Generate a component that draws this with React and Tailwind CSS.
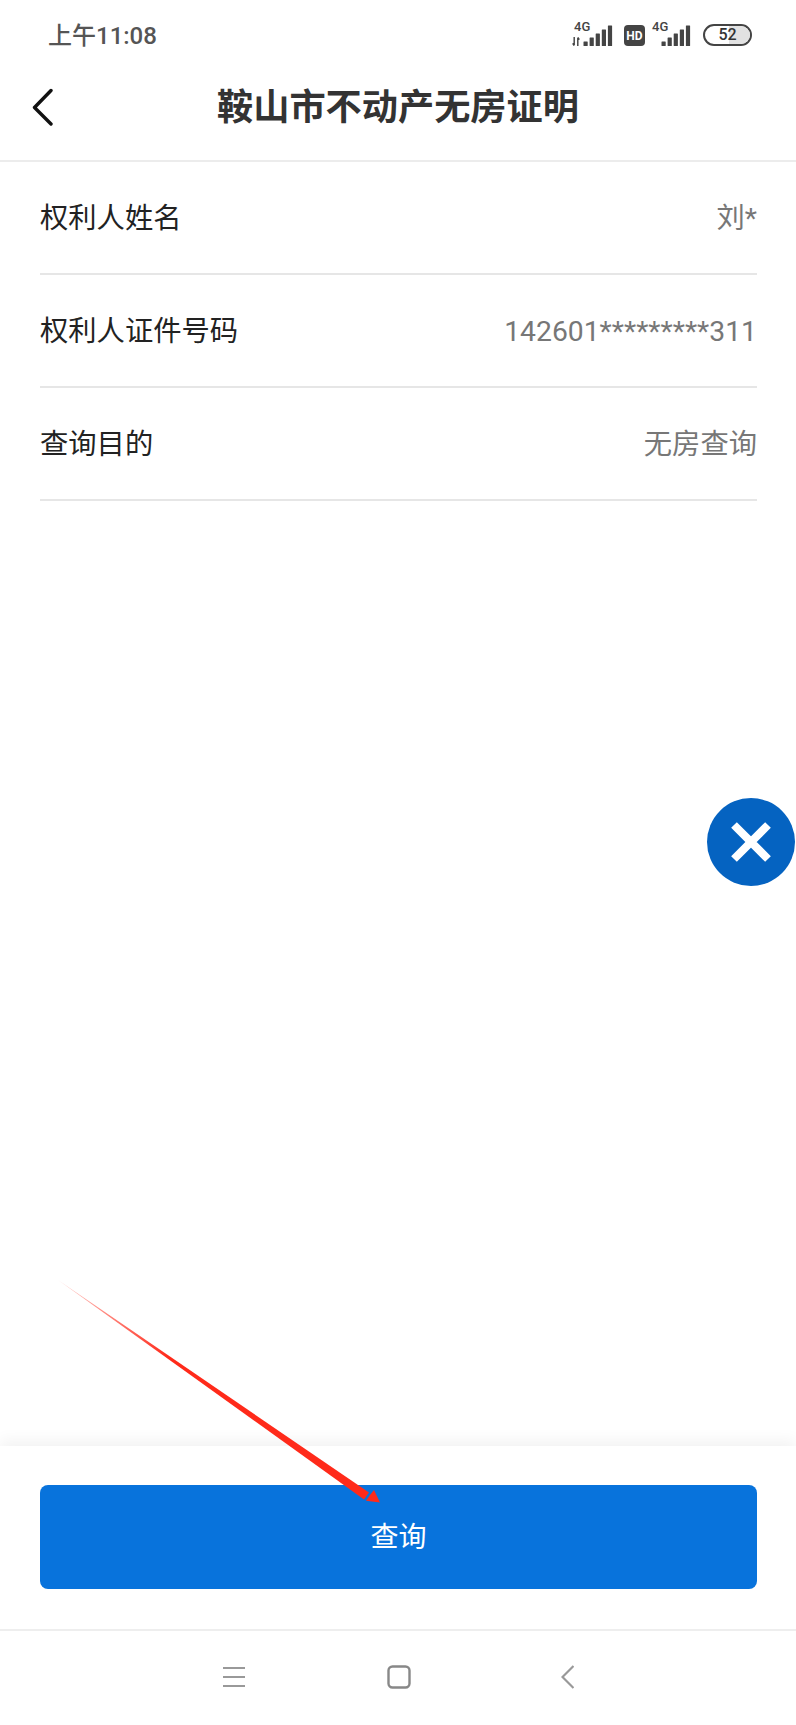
const cjk = "font-['Roboto','Noto_Sans_CJK_SC',sans-serif]";

const rows = [
  { label: "权利人姓名", value: "刘*" },
  { label: "权利人证件号码", value: "142601*********311" },
  { label: "查询目的", value: "无房查询" },
];

function Signal({ className }) {
  return (
    <svg width="30" height="21" viewBox="0 0 30 21" className={className} fill="#444">
      <rect x="0.5" y="16.5" width="4.2" height="4.5" rx="0.5" />
      <rect x="6.6" y="12.5" width="4.2" height="8.5" rx="0.5" />
      <rect x="12.7" y="8.5" width="4.2" height="12.5" rx="0.5" />
      <rect x="18.8" y="4.5" width="4.2" height="16.5" rx="0.5" />
      <rect x="24.9" y="0.5" width="4.2" height="20.5" rx="0.5" />
    </svg>
  );
}

function StatusBar() {
  return (
    <div className="h-[62px] flex items-center justify-between pl-[48px] pr-[44px] shrink-0">
      <span className={`${cjk} text-[24px] leading-none font-medium text-[#555] mt-[9px]`}>
        上午11:08
      </span>
      <div className="flex items-start h-[40px] mt-[8px]">
        {/* sim 1 */}
        <div className="relative w-[41px] h-[40px]">
          <span className="absolute left-[2px] top-0 text-[13px] leading-[24px] font-medium text-[#444] font-['Roboto',sans-serif]">4G</span>
          <svg width="8" height="9" viewBox="0 0 8 10" className="absolute left-0 top-[22px]" fill="none" stroke="#444" strokeWidth="1.6">
            <path d="M2 0V9M0.3 7L2 9.5M6 10V1M7.7 3L6 0.5" />
          </svg>
          <Signal className="absolute left-[11px] top-[10px]" />
        </div>
        {/* HD badge */}
        <div className="ml-[11px] mt-[10px] w-[21px] h-[21px] rounded-[4px] bg-[#444] flex items-center justify-center text-white text-[12px] font-bold leading-none font-['Roboto',sans-serif]">
          HD
        </div>
        {/* sim 2 */}
        <div className="relative ml-[7px] w-[39px] h-[40px]">
          <span className="absolute left-0 top-0 text-[13px] leading-[24px] font-medium text-[#444] font-['Roboto',sans-serif]">4G</span>
          <Signal className="absolute left-[9px] top-[10px]" />
        </div>
        {/* battery */}
        <div className="ml-[12px] mt-[9px] w-[49px] h-[22px] rounded-full border-2 border-[#444] overflow-hidden relative flex items-center justify-center">
          <div className="absolute right-0 top-0 bottom-0 w-[21px] bg-[#e2e2e2]" />
          <span className="relative text-[16px] leading-none font-medium text-[#333] font-['Roboto',sans-serif]">52</span>
        </div>
      </div>
    </div>
  );
}

function Header() {
  return (
    <div className="relative h-[98px] shrink-0 flex items-center justify-center border-b-2 border-[#ececec] box-content">
      <button className="absolute left-[32px] top-[26px]" aria-label="back">
        <svg width="22" height="38" viewBox="0 0 22 38" fill="none" stroke="#111" strokeWidth="3.4" strokeLinecap="round" strokeLinejoin="round">
          <path d="M19 2.5 2.5 19.5 19 36" />
        </svg>
      </button>
      <h1 className={`${cjk} text-[36.2px] font-bold leading-none text-[#333] mt-[-6px]`}>鞍山市不动产无房证明</h1>
    </div>
  );
}

export default function App() {
  return (
    <div className={`${cjk} relative w-[796px] h-[1725px] bg-white flex flex-col overflow-hidden`}>
      <StatusBar />
      <Header />

      <div className="flex-1 pl-[40px] pr-[39px]">
        {rows.map((r) => (
          <div key={r.label} className="h-[113px] border-b-2 border-[#e6e6e6] flex items-start justify-between pt-[39px]">
            <span className="text-[28.3px] leading-[36px] text-[#222]">{r.label}</span>
            <span className="text-[28.3px] leading-[36px] text-[#777]">{r.value}</span>
          </div>
        ))}
      </div>

      {/* bottom action panel */}
      <div className="h-[183px] shrink-0 bg-white pl-[40px] pr-[39px] pt-[39px] shadow-[0_-6px_14px_rgba(0,0,0,0.05)] relative">
        <button className="w-full h-[104px] rounded-[8px] bg-[#0873dc] text-white text-[28px] leading-none pt-[2px]">查询</button>
      </div>

      {/* system nav */}
      <div className="h-[96px] shrink-0 border-t-2 border-[#eeeeee] bg-white relative flex items-center justify-center pb-[2px]">
        <svg width="22" height="22" viewBox="0 0 22 22" fill="none" stroke="#999" strokeWidth="2.2" className="mr-[142px]">
          <path d="M0 2H22M0 11H22M0 20H22" />
        </svg>
        <svg width="24" height="24" viewBox="0 0 24 24" fill="none" stroke="#888" strokeWidth="2.4">
          <rect x="1.5" y="1.5" width="21" height="21" rx="4" />
        </svg>
        <svg width="13" height="24" viewBox="0 0 13 24" fill="none" stroke="#999" strokeWidth="2.2" className="ml-[150px]">
          <path d="M12.5 1 1.5 12 12.5 23" />
        </svg>
      </div>

      {/* floating close */}
      <div className="absolute left-[707px] top-[798px] w-[88px] h-[88px] rounded-full bg-[#0563c1] flex items-center justify-center">
        <svg width="42" height="42" viewBox="0 0 42 42" fill="none" stroke="#fff" strokeWidth="8">
          <path d="M4 4 38 38M38 4 4 38" />
        </svg>
      </div>

      {/* red annotation arrow */}
      <svg className="absolute left-0 top-0 pointer-events-none" width="796" height="1725" viewBox="0 0 796 1725">
        <defs>
          <linearGradient id="arrowFade" gradientUnits="userSpaceOnUse" x1="60" y1="1280" x2="170" y2="1356">
            <stop offset="0" stopColor="#ff2a1a" stopOpacity="0.25" />
            <stop offset="1" stopColor="#ff2a1a" />
          </linearGradient>
        </defs>
        <path d="M58 1280 L369 1492.5 L364 1499.5 Z" fill="url(#arrowFade)" />
        <path d="M380 1502.5 L366 1500.7 L370 1495 L374 1490 Z" fill="#ff2a1a" />
      </svg>
    </div>
  );
}
